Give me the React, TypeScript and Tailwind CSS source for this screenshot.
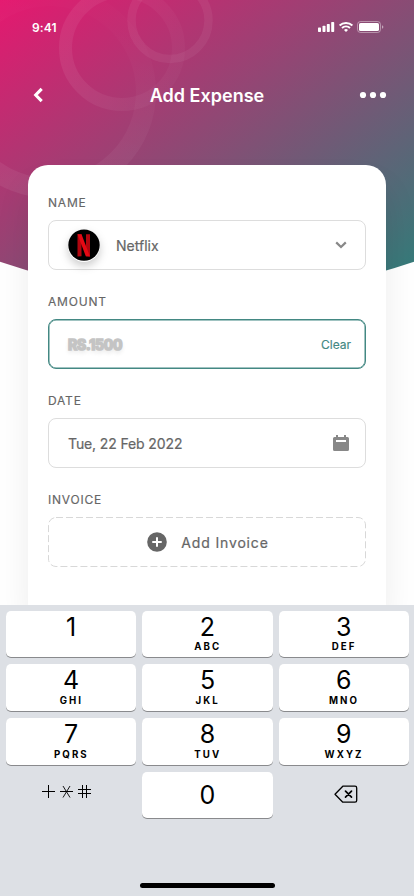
import React from "react";

function Backdrop() {
  return (
    <svg className="absolute left-0 top-0" width="414" height="300" viewBox="0 0 414 300" fill="none">
      <defs>
        <linearGradient id="header" x1="0" y1="0" x2="1" y2="1">
          <stop offset="0" stopColor="#e5186f" />
          <stop offset="1" stopColor="#2c807a" />
        </linearGradient>
        <linearGradient id="ringLarge" x1="0" y1="1" x2="0.3" y2="0">
          <stop offset="0.1" stopColor="#fff" stopOpacity="0.06" />
          <stop offset="1" stopColor="#fff" stopOpacity="0.01" />
        </linearGradient>
        <linearGradient id="ringMedium" x1="0" y1="0.5" x2="1" y2="0.5">
          <stop offset="0" stopColor="#fff" stopOpacity="0.065" />
          <stop offset="1" stopColor="#fff" stopOpacity="0.025" />
        </linearGradient>
      </defs>
      <path d="M0 0H414V261.700Q207 332 0 261.700Z" fill="url(#header)" />
      <circle cx="50" cy="92" r="96" stroke="url(#ringLarge)" strokeWidth="20" />
      <circle cx="122" cy="48" r="56.500" stroke="url(#ringMedium)" strokeWidth="13" />
      <circle cx="170" cy="20.500" r="38.500" stroke="#fff" strokeOpacity="0.055" strokeWidth="8.500" />
    </svg>
  );
}

function StatusBar() {
  return (
    <div className="flex h-[54px] items-center justify-between pl-8 pr-[30px] text-white">
      <span className="pt-[1px] text-[12px] font-semibold tracking-[0.100px]">9:41</span>
      <svg width="67" height="14" viewBox="0 0 67 14" fill="#fff">
        <rect x="1" y="7.5" width="3" height="4.500" rx="0.7" />
        <rect x="5.500" y="5.800" width="3" height="6.200" rx="0.7" />
        <rect x="9.800" y="4" width="3" height="8" rx="0.7" />
        <rect x="14.200" y="2" width="3" height="10" rx="0.7" />
        <g fill="none" stroke="#fff" strokeWidth="2">
          <path d="M22.600 5.400a9.400 9.400 0 0 1 12.800 0" />
          <path d="M25 8.100a6 6 0 0 1 8 0" />
        </g>
        <path d="M27 10a3 3 0 0 1 4 0L29 12Z" />
        <rect x="40.500" y="1.500" width="23" height="11" rx="3" fill="none" stroke="#fff" strokeOpacity="0.4" />
        <rect x="42" y="3" width="20" height="8" rx="1.600" />
        <path d="M65 5.200v3.600q1.400-.6 1.400-1.800T65 5.200Z" fillOpacity="0.5" />
      </svg>
    </div>
  );
}

function Field({ label, className, children }: { label: string; className: string; children: React.ReactNode }) {
  return (
    <div>
      <div className="h-[15px] text-[12px] leading-[15px] tracking-[0.800px] text-[#666] [-webkit-text-stroke:0.15px_#666]">{label}</div>
      <div className={"mt-[10px] flex h-[50px] items-center rounded-lg " + className}>{children}</div>
    </div>
  );
}

function Key({ digit, letters }: { digit: string; letters?: string }) {
  return (
    <div className="flex h-[46.600px] flex-col items-center rounded-[5px] bg-white shadow-[0_1px_0_#898a8d]">
      <span className={"text-[25px] leading-[28px] text-black " + (digit === "0" ? "mt-[9px]" : "mt-[2px]")}>{digit}</span>
      {letters && (
        <span className="mt-[0.400px] pl-[0.500px] text-[9.700px] font-bold leading-[12px] tracking-[2.050px] text-black">{letters}</span>
      )}
    </div>
  );
}

const keys: [string, string][] = [
  ["1", ""], ["2", "ABC"], ["3", "DEF"],
  ["4", "GHI"], ["5", "JKL"], ["6", "MNO"],
  ["7", "PQRS"], ["8", "TUV"], ["9", "WXYZ"],
];

function Keyboard() {
  return (
    <div className="relative flex h-[291px] flex-col bg-[#dde0e5] pl-[6px] pr-[5px] pt-[5.800px]">
      <div className="grid grid-cols-3 gap-x-[6px] gap-y-[7.100px]">
        {keys.map(([d, l]) => <Key key={d} digit={d} letters={l} />)}
        <div className="pl-[35px] pt-[12px]">
          <svg width="52" height="16" viewBox="0 0 52 16" fill="none" stroke="#000" strokeWidth="1">
            <path d="M1 7.500h13M7.500 1v13" />
            <path d="M19 7.500h13" />
            <path d="M22 2l7 11.500M29 2l-7 11.500" strokeWidth="0.900" />
            <path d="M37 5.500h13M37 9.500h13M41.500 1v13M45.500 1v13" />
          </svg>
        </div>
        <Key digit="0" />
        <div className="flex justify-center pl-[4px] pt-[13px]">
          <svg width="24" height="19" viewBox="0 0 24 19" fill="none" stroke="#000" strokeWidth="1.300" strokeLinejoin="round" strokeLinecap="round">
            <path d="M8.800 1.200H21a1.700 1.700 0 0 1 1.700 1.700V15.500a1.700 1.700 0 0 1-1.700 1.700H8.800L1 9.200Z" />
            <path d="M11.500 6.200l6 6M17.500 6.200l-6 6" strokeWidth="1.700" />
          </svg>
        </div>
      </div>
      <div className="mb-2 ml-[134px] mt-auto h-[5px] w-[135px] rounded-full bg-black" />
    </div>
  );
}

export default function App() {
  return (
    <div className="relative flex h-[896px] w-[414px] flex-col overflow-hidden bg-white font-[Inter,sans-serif]">
      <Backdrop />
      <div className="relative flex flex-1 flex-col">
        <StatusBar />
        <header className="flex h-[82px] items-center justify-between pl-[33px] pr-[27px] text-white">
          <svg width="12" height="16" viewBox="0 0 12 16" fill="none" stroke="#fff" strokeWidth="3.100">
            <path d="M8.700 1.800L2.700 8l6 6.200" />
          </svg>
          <h1 className="pl-[10px] pt-[2px] text-[18px] font-semibold leading-[22px]">Add Expense</h1>
          <svg width="28" height="8" viewBox="0 0 28 8" fill="#fff">
            <circle cx="4" cy="4" r="3.100" />
            <circle cx="14" cy="4" r="3.100" />
            <circle cx="24" cy="4" r="3.100" />
          </svg>
        </header>
        <main className="mx-7 mt-[29px] flex flex-1 flex-col gap-6 rounded-t-[20px] bg-white px-5 pt-[30px] shadow-[0_22px_35px_rgba(0,0,0,0.08)]">
          <Field label="NAME" className="border border-[#ddd] px-[19px]">
            <svg className="mt-[2px] overflow-visible drop-shadow-[0_4px_4px_rgba(0,0,0,0.2)]" width="33" height="34" viewBox="0 0 33 34">
              <circle cx="16" cy="17" r="16" fill="#fff" />
              <circle cx="16" cy="16.100" r="15.700" fill="#000" />
              <path d="M9.500 5.300h4v22l-4 .3ZM18 5.300h4v22.300l-4-.3Z" fill="#b1060f" />
              <path d="M9.500 5.300h4l8.500 22.300-4.200-.4Z" fill="#e50914" />
            </svg>
            <span className="ml-[15px] pt-[1px] text-[14px] text-[#666] [-webkit-text-stroke:0.2px_#666]">Netflix</span>
            <svg className="ml-auto mr-[-1px]" width="12" height="10" viewBox="0 0 12 10" fill="none" stroke="#888" strokeWidth="2.200">
              <path d="M1.200 2.400L6 7l4.800-4.600" />
            </svg>
          </Field>
          <Field label="AMOUNT" className="border border-[#438883] pl-[19px] pr-[14px] shadow-[inset_0_0_0_0.500px_#438883]">
            <span className="pt-[1px] text-[14px] font-bold tracking-[-0.200px] text-[#c4c4c4] [-webkit-text-stroke:1.600px_#c4c4c4] [text-shadow:0_3px_4px_rgba(0,0,0,0.12)]">RS.1500</span>
            <span className="ml-auto pt-[1px] text-[12px] text-[#438883] [-webkit-text-stroke:0.150px_#438883]">Clear</span>
          </Field>
          <Field label="DATE" className="border border-[#ddd] px-[19px]">
            <span className="pt-[1px] text-[14px] tracking-[-0.120px] text-[#666] [-webkit-text-stroke:0.2px_#666]">Tue, 22 Feb 2022</span>
            <svg className="ml-auto mr-[-5px]" width="18" height="18" viewBox="0 0 18 18" fill="#888">
              <path fillRule="evenodd" d="M3 1h2v2h6V1h2v2h1.500A1.500 1.500 0 0 1 16 4.500v11A1.500 1.500 0 0 1 14.500 17h-13A1.500 1.500 0 0 1 0 15.500v-11A1.500 1.500 0 0 1 1.500 3H3ZM3 6v2h10V6Z" />
            </svg>
          </Field>
          <Field label="INVOICE" className="relative justify-center pl-[2px]">
            <svg className="absolute inset-0" width="318" height="50" fill="none">
              <rect x="0.500" y="0.500" width="317" height="49" rx="7.500" stroke="#d8d8d8" strokeDasharray="7 3" />
            </svg>
            <svg width="20" height="20" viewBox="0 0 20 20">
              <circle cx="10" cy="10" r="9.800" fill="#666" />
              <path d="M10 6v8M6 10h8" stroke="#fff" strokeWidth="2" strokeLinecap="round" />
            </svg>
            <span className="ml-[14px] pt-[1px] text-[14px] tracking-[0.850px] text-[#666] [-webkit-text-stroke:0.200px_#666]">Add Invoice</span>
          </Field>
        </main>
      </div>
      <Keyboard />
    </div>
  );
}
